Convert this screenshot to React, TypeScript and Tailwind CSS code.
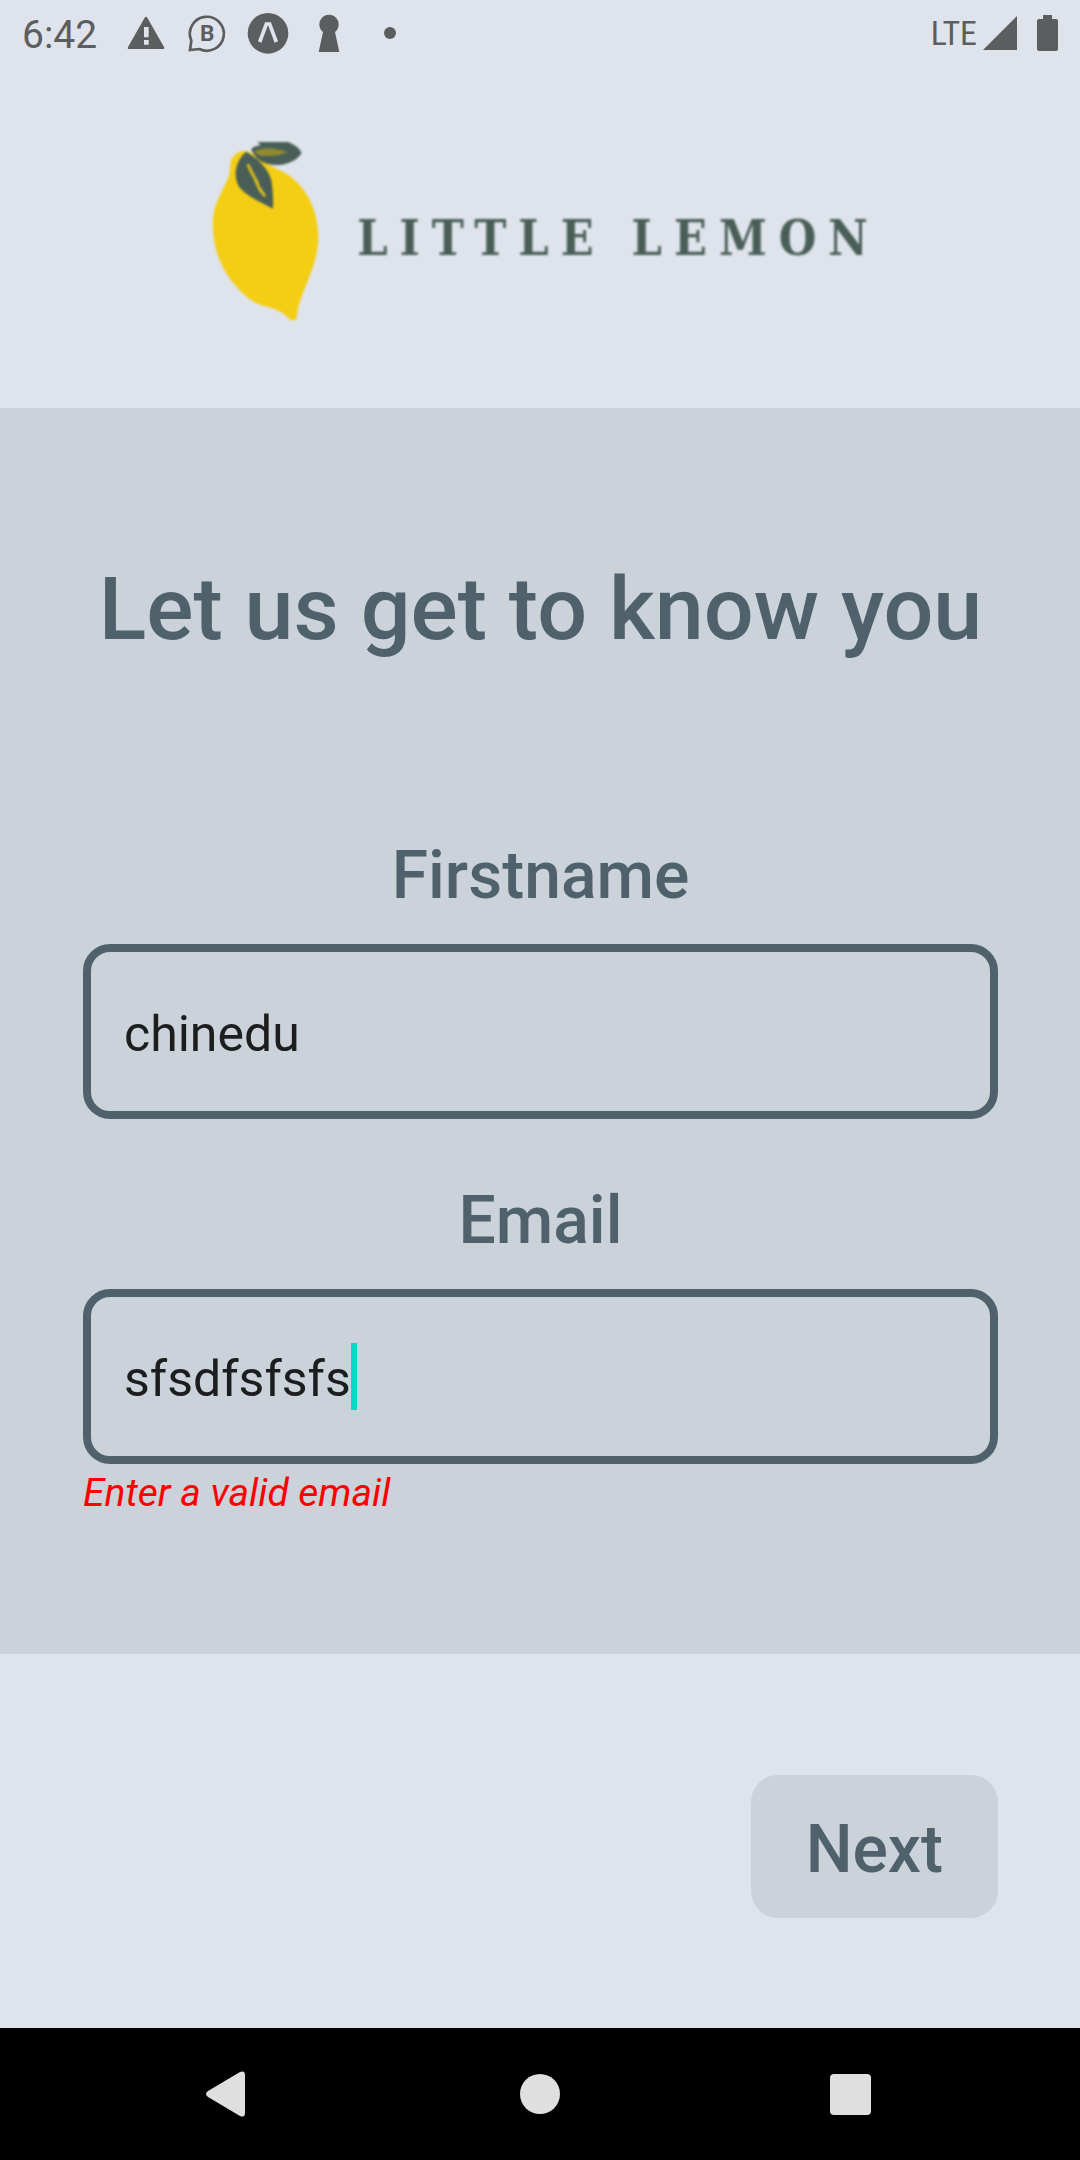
import { useState } from "react";
import type { ReactNode } from "react";

function StatusIcon({ label, children }: { label: string; children: ReactNode }) {
  return (
    <svg viewBox="0 0 132 132" className="size-11 shrink-0" role="img" aria-label={label} fill="currentColor">
      {children}
    </svg>
  );
}

function StatusBar() {
  return (
    <div className="flex h-[66px] items-center justify-between pr-[22px] pl-[22px] text-[#5c5d5e]">
      <div className="flex items-center gap-[17px]">
        <span className="mr-[10px] pt-[3px] text-[39px] leading-[46px] font-normal">6:42</span>
        <StatusIcon label="Warning">
          <path
            fillRule="evenodd"
            d="M62 20Q66 15 70 20L120 108Q123 114 117 114H15Q9 114 12 108ZM60 48V79H74V48ZM60 87V101H74V87Z"
          />
        </StatusIcon>
        <StatusIcon label="Business chat">
          <path
            d="M15 117L19 89A51 51 0 1 1 43 114Z"
            fill="none"
            stroke="currentColor"
            strokeWidth="8"
            strokeLinejoin="miter"
          />
          <text x="67" y="90" fontSize="68" fontWeight="700" textAnchor="middle">
            B
          </text>
        </StatusIcon>
        <StatusIcon label="Expo">
          <circle cx="66" cy="67" r="61" />
          <path d="M41 93L61 39H71L91 93" fill="none" stroke="#dfe4ec" strokeWidth="11" />
        </StatusIcon>
        <StatusIcon label="Keyhole">
          <path d="M48 63A29 29 0 1 1 84 63L97 123H35Z" />
        </StatusIcon>
        <StatusIcon label="More notifications">
          <circle cx="66" cy="66" r="18" />
        </StatusIcon>
      </div>
      <div className="flex items-center">
        <span className="mr-[6px] font-['Liberation_Sans_Narrow','Roboto_Condensed',Roboto,sans-serif] text-[34px] leading-[38px]">
          LTE
        </span>
        <svg viewBox="0 0 34 34" className="mr-[20px] size-[34px]" fill="currentColor" role="img" aria-label="Signal">
          <path d="M34 0V34H0Z" />
        </svg>
        <svg viewBox="0 0 21 36" className="h-9 w-[21px]" fill="currentColor" role="img" aria-label="Battery">
          <path d="M6 0H15V4H19Q21 4 21 6V34Q21 36 19 36H2Q0 36 0 34V6Q0 4 2 4H6Z" />
        </svg>
      </div>
    </div>
  );
}

function Logo() {
  return (
    <div className="flex items-center justify-center gap-[38px] pt-[76px] pb-[88px] blur-[1px]">
      <svg viewBox="69 36 321 534" className="h-[178px] w-[107px] shrink-0" role="img" aria-label="Lemon">
        <path
          fill="#f4ce14"
          d="M124 98C134 62 172 52 197 76C222 98 254 112 284 126C346 162 388 232 388 325C386 404 346 466 327 534L322 570H304C286 550 262 536 226 528C188 518 158 492 126 450C92 405 72 350 71 280C71 222 104 180 118 142Q124 126 124 98Z"
        />
        <path fill="#495e57" d="M205 36H297Q328 48 338 68Q322 98 270 105Q235 107 208 89Q194 76 186 58Q194 48 215 46Z" />
        <path fill="#8f8b2f" d="M196 64Q235 44 296 66Q270 80 218 78Q204 76 196 64Z" />
        <path fill="#495e57" d="M171 65C206 84 238 116 247 150Q254 190 252 236C218 218 174 200 151 172C130 138 140 92 171 65Z" />
        <path
          fill="none"
          stroke="#d8bd1e"
          strokeWidth="9"
          strokeLinecap="round"
          d="M178 106L190 132M190 130L206 160M200 152L214 182M212 176L226 196"
        />
      </svg>
      <div className="flex gap-[38px] pt-[14px] font-['DejaVu_Serif_Condensed','DejaVu_Serif',serif] text-[48px] leading-[56px] font-bold text-[#495e57]">
        <span className="-mr-[12px] tracking-[12px]">LITTLE</span>
        <span className="-mr-[12px] tracking-[12px]">LEMON</span>
      </div>
    </div>
  );
}

function Field({
  id,
  label,
  value,
  onChange,
  caret,
  error,
}: {
  id: string;
  label: string;
  value: string;
  onChange: (value: string) => void;
  caret?: boolean;
  error?: string;
}) {
  return (
    <div className="flex flex-col">
      <label htmlFor={id} className="mb-[30px] text-center text-[66px] leading-[77px] font-medium">
        {label}
      </label>
      <div className="flex h-[175px] items-center rounded-[27px] border-8 border-[#4f616a] px-[33px]">
        <input
          id={id}
          type="text"
          value={value}
          onChange={(event) => onChange(event.target.value)}
          aria-invalid={error ? true : undefined}
          aria-describedby={error ? `${id}-error` : undefined}
          className="field-sizing-content max-w-full bg-transparent pt-1 text-[50px] leading-[58px] font-normal text-[#1b1d1e] outline-none"
        />
        {caret && <span className="h-[67px] w-[6px] shrink-0 bg-[#03dac6]" />}
      </div>
      {error && (
        <p id={`${id}-error`} className="mt-[6px] text-[39px] leading-[46px] text-[#ff0000] italic">
          {error}
        </p>
      )}
    </div>
  );
}

function NavBar() {
  return (
    <nav className="flex h-[132px] items-center justify-center gap-[230px] bg-black text-[#dfdfdf]">
      <button type="button" aria-label="Back" className="flex size-20 items-center justify-center pr-2">
        <svg viewBox="0 0 40 46" className="h-[46px] w-10" fill="currentColor">
          <path d="M2 20L34 1Q39 -1 39 4V42Q39 47 34 45L2 26Q-2 23 2 20Z" />
        </svg>
      </button>
      <button type="button" aria-label="Home" className="flex size-20 items-center justify-center">
        <span className="size-10 rounded-full bg-current" />
      </button>
      <button type="button" aria-label="Recent apps" className="flex size-20 items-center justify-center">
        <span className="size-[41px] rounded-[4px] bg-current" />
      </button>
    </nav>
  );
}

export default function App() {
  const [firstName, setFirstName] = useState("chinedu");
  const [email, setEmail] = useState("sfsdfsfsfs");
  const emailError = /^\S+@\S+\.\S+$/.test(email) ? undefined : "Enter a valid email";

  return (
    <div className="flex min-h-screen flex-col bg-[#dfe4ec] font-[Roboto,sans-serif] text-[#4f616a]">
      <header>
        <StatusBar />
        <Logo />
      </header>
      <form className="flex flex-1 flex-col" noValidate onSubmit={(event) => event.preventDefault()}>
        <div className="bg-[#cbd2da] pt-[149px] pr-[82px] pb-[138px] pl-[83px]">
          <h1 className="mb-[177px] text-center text-[88px] leading-[103px] font-medium whitespace-nowrap">
            Let us get to know you
          </h1>
          <div className="flex flex-col gap-[63px]">
            <Field id="firstname" label="Firstname" value={firstName} onChange={setFirstName} />
            <Field id="email" label="Email" value={email} onChange={setEmail} caret error={emailError} />
          </div>
        </div>
        <div className="flex justify-end pt-[121px] pr-[82px] pl-[83px]">
          <button
            type="submit"
            className="rounded-[27px] bg-[#cbd2da] px-[55px] pt-9 pb-[30px] text-[66px] leading-[77px] font-medium"
          >
            Next
          </button>
        </div>
      </form>
      <NavBar />
    </div>
  );
}
